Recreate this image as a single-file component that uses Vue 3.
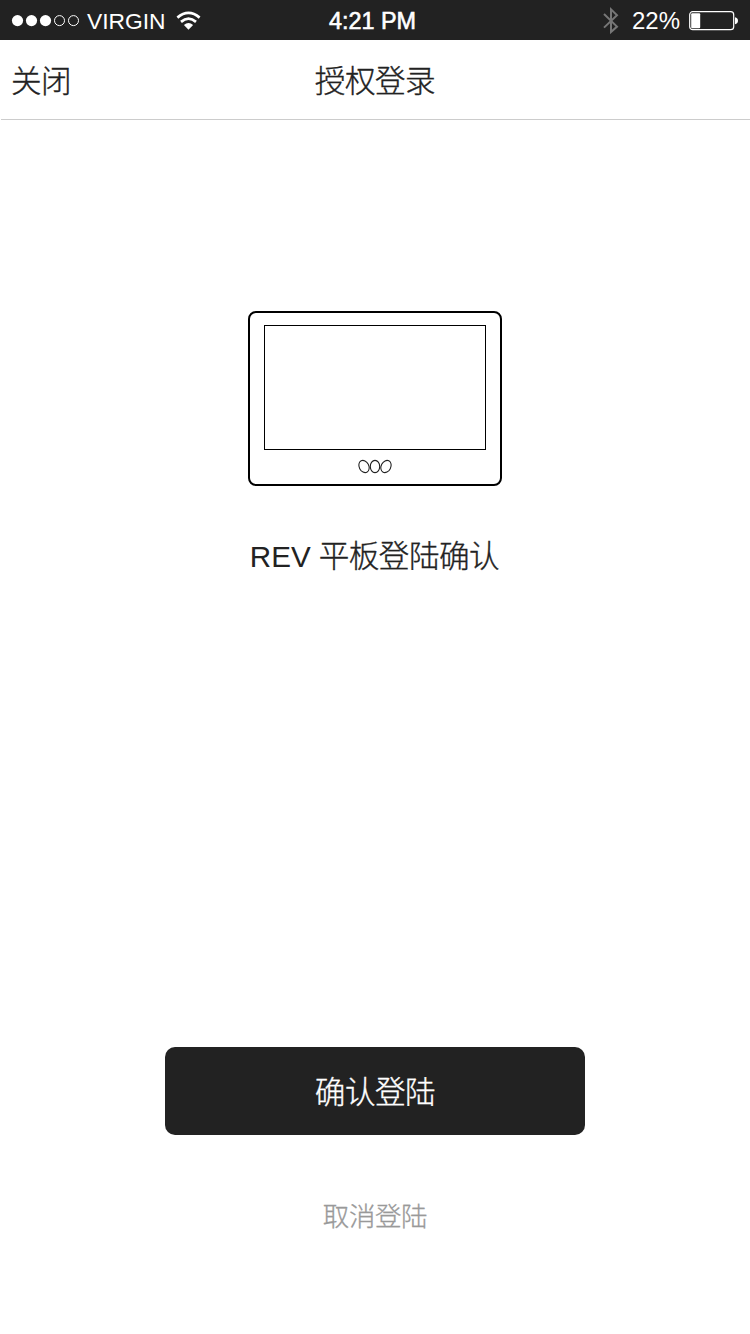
<script setup>
const signal = [true, true, true, false, false]
</script>

<template>
  <div class="screen">
    <header class="status">
      <div class="side">
        <svg class="dots" width="70" height="14" viewBox="0 0 70 14">
          <circle
            v-for="(on, i) in signal"
            :key="i"
            :cx="6.5 + i * 14"
            cy="6.6"
            :r="on ? 5.6 : 5"
            :fill="on ? '#fff' : 'none'"
            :stroke="on ? 'none' : '#fff'"
            stroke-width="1"
          />
        </svg>
        <span class="carrier">VIRGIN</span>
        <svg class="wifi" width="26" height="20" viewBox="0 0 26 20">
          <g fill="none" stroke="#fff" stroke-width="2.7">
            <path d="M1.4 6.6 Q12.5 -2.8 23.6 6.6" />
            <path d="M5 10.9 Q12.5 4.5 20 10.9" />
          </g>
          <path d="M7.9 14 Q12.5 10 17.1 14 L12.5 18.7Z" fill="#fff" />
        </svg>
      </div>
      <span class="time">4:21 PM</span>
      <div class="side right">
        <svg class="bluetooth" width="18" height="28" viewBox="0 0 18 28">
          <path d="M2 7 L15 19.6 L9 25 V2.4 L15 8.2 L2 20.6" fill="none" stroke="#777" stroke-width="2" />
        </svg>
        <span class="percent">22%</span>
        <svg class="battery" width="50" height="20" viewBox="0 0 50 20">
          <rect x=".7" y=".7" width="44" height="18" rx="3" fill="none" stroke="#fff" stroke-width="1.2" />
          <rect x="2.2" y="2.2" width="9" height="15" rx="1" fill="#fff" />
          <path d="M46 6.2 Q49 7 49 9.7 Q49 12.5 46 13.3Z" fill="#fff" />
        </svg>
      </div>
    </header>

    <nav class="nav">
      <span class="close">关闭</span>
      <span class="title">授权登录</span>
    </nav>

    <main class="content">
      <svg class="tablet" width="254" height="175" viewBox="0 0 254 175">
        <g fill="none" stroke="#000">
          <rect x="1" y="1" width="252" height="173" rx="7" stroke-width="2" />
          <rect x="16.5" y="14.5" width="221" height="124" stroke-width="1" />
          <g stroke="#222" stroke-width="1.1">
            <ellipse cx="116" cy="155.5" rx="4.8" ry="6.4" transform="rotate(-27 116 155.5)" />
            <ellipse cx="127" cy="155.5" rx="4.7" ry="6.1" />
            <ellipse cx="138" cy="155.5" rx="4.8" ry="6.4" transform="rotate(27 138 155.5)" />
          </g>
        </g>
      </svg>
      <p class="message"><span class="brand">REV</span> 平板登陆确认</p>
    </main>

    <footer class="actions">
      <button class="confirm">确认登陆</button>
      <button class="cancel">取消登陆</button>
    </footer>
  </div>
</template>

<style>
body {
  margin: 0;
  background: #fff;
}
</style>

<style scoped>
.screen {
  display: flex;
  flex-direction: column;
  width: 750px;
  height: 1334px;
  overflow: hidden;
  background: #fff;
  color: #222;
  font-family: "Liberation Sans", "Noto Sans CJK SC", sans-serif;
  font-weight: 300;
}

.status {
  display: grid;
  grid-template-columns: 1fr auto 1fr;
  align-items: center;
  flex: none;
  box-sizing: border-box;
  height: 40px;
  padding-top: 2px;
  background: #222;
  color: #fff;
  font-size: 23px;
  line-height: 38px;
  white-space: nowrap;
}

.side {
  display: flex;
  align-items: center;
  height: 38px;
  padding-left: 11px;
}

.carrier {
  margin-left: 6px;
  font-size: 22.8px;
}

.wifi {
  margin-left: 10px;
}

.time {
  padding-right: 5px;
  font-size: 23.4px;
  -webkit-text-stroke: 0.6px #fff;
}

.right {
  justify-content: flex-end;
  padding: 0 11px 0 0;
}

.percent {
  margin: 0 9px 0 12px;
  font-size: 24px;
}

.nav {
  display: grid;
  grid-template-columns: 1fr auto 1fr;
  align-items: center;
  flex: none;
  box-sizing: border-box;
  height: 80px;
  margin-left: 1px;
  padding-top: 2px;
  border-bottom: 1px solid #ccc;
  font-size: 30.6px;
  letter-spacing: -0.5px;
  line-height: 44px;
  -webkit-text-stroke: 0.35px #222;
}

.close {
  padding-left: 10px;
}

.title {
  padding-right: 1px;
}

.content {
  display: flex;
  flex-direction: column;
  align-items: center;
  padding-top: 191px;
}

.tablet {
  display: block;
}

.message {
  margin: 48px 0 0;
  padding-right: 1px;
  font-size: 30.6px;
  letter-spacing: -0.5px;
  line-height: 44px;
  -webkit-text-stroke: 0.35px #222;
}

.brand {
  font-size: 29.6px;
  letter-spacing: 0;
  -webkit-text-stroke: 0;
}

.actions {
  display: flex;
  flex-direction: column;
  align-items: center;
  margin-top: auto;
  padding-bottom: 97px;
}

button {
  padding: 0;
  border: 0;
  background: none;
  font: inherit;
}

.confirm {
  width: 420px;
  height: 88px;
  padding-bottom: 3px;
  border-radius: 10px;
  background: #222;
  color: #fff;
  font-size: 30.6px;
  letter-spacing: -0.5px;
  -webkit-text-stroke: 0.35px #fff;
}

.cancel {
  margin-top: 62px;
  height: 40px;
  color: #999;
  font-size: 26.5px;
  letter-spacing: -0.4px;
  line-height: 40px;
  -webkit-text-stroke: 0.3px #999;
}
</style>
